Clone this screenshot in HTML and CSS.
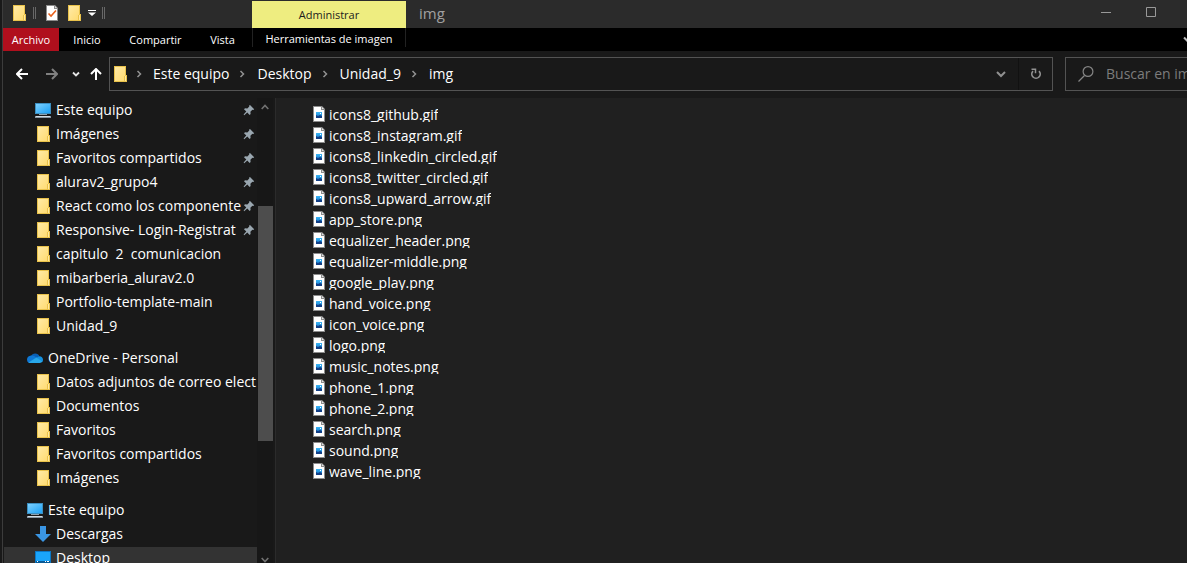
FILE: index.html
```html
<!DOCTYPE html>
<html lang="es">
<head>
<meta charset="utf-8">
<title>img</title>
<link rel="stylesheet" href="styles.css">
</head>
<body>
<svg class="defs" aria-hidden="true">
  <defs>
    <linearGradient id="gFolder" x1="0" y1="0" x2="1" y2="1"><stop offset="0" stop-color="#ffeaa6"/><stop offset="1" stop-color="#ffdb70"/></linearGradient>
    <linearGradient id="gScreen" x1="0" y1="0" x2="1" y2="1"><stop offset="0" stop-color="#7cd0ff"/><stop offset="1" stop-color="#1ea2f5"/></linearGradient>
    <linearGradient id="gPhoto" x1="0" y1="0" x2="0" y2="1"><stop offset="0" stop-color="#3ab5f5"/><stop offset="1" stop-color="#1474c8"/></linearGradient>
    <symbol id="folder" viewBox="0 0 16 16"><path d="M2 0h12v9h1v7H2z" fill="#e9c24b"/><path d="M3 1h10v9h-1v5H3z" fill="url(#gFolder)"/><path d="M13 10h1v5h-1z" fill="#ffe9a2"/></symbol>
    <symbol id="pc" viewBox="0 0 16 16"><path d="M0 1h16v11H0z" fill="#3d8fc0"/><path d="M1 2h14v9H1z" fill="url(#gScreen)"/><path d="M5 12h6v1H5z" fill="#73818c"/><path d="M4 12h8v1H4z" fill="#8fa2b0"/><path d="M0 14h16v2H0z" fill="#8997a3"/><path d="M1 14h14v1H1z" fill="#d1dbe2"/></symbol>
    <symbol id="pin" viewBox="0 0 12 12"><path d="M7 1l4.200 4.200-1 .8-.8-.2-2 2 .2 2.200-1 1L4.300 8.600 1.200 11.200l-.6-.6L3.300 7.500 1 5.200l1-1 2.300.3 2-2L6 1.800z" fill="#9aa7b0"/></symbol>
    <symbol id="cloud" viewBox="0 0 16 12"><path d="M4 4.500a4.500 4.500 0 0 1 8.400 0L8 8z" fill="#0a5fb4"/><path d="M4 3.600c2.500-.6 4 1 6 2.300L2 11a3.700 3.700 0 0 1-2-3.300C0 5.400 1.700 3.800 4 3.600z" fill="#0f78d4"/><path d="M12.300 4.200c2.300.1 3.700 1.700 3.700 3.500 0 1-.4 2-1 2.500L9 6z" fill="#1490df"/><path d="M9.400 5.600L15.400 9.600c-.6.900-1.500 1.400-2.600 1.400H3.500c-.8 0-1.500-.2-2-.6z" fill="#28a8ea"/></symbol>
    <symbol id="down" viewBox="0 0 16 16"><path d="M5 0h6v8h5l-8 8-8-8h5z" fill="#3a96e4"/></symbol>
    <symbol id="desk" viewBox="0 0 16 16"><path d="M0 1h16v13H0z" fill="#0a78c8"/><path d="M1 2h14v9H1z" fill="#1aa5fb"/><path d="M1 11h14v2H1z" fill="#085a96"/><path d="M2 11h1v1H2zM10 11h1v1h-1zM12 11h2v1h-2z" fill="#fff"/></symbol>
    <symbol id="photo" viewBox="0 0 12 16"><path d="M0 0h9l3 3v13H0z" fill="#8c8c8c"/><path d="M1 1h7v3h3v11H1z" fill="#fff"/><path d="M9 1l2 2H9z" fill="#e4e4e4"/><path d="M3 6h6v6H3z" fill="url(#gPhoto)"/><path d="M3 9l2 1 2-1 2 1v2H3z" fill="#123f86"/><path d="M7 7h1v1H7z" fill="#fff"/></symbol>
    <symbol id="chev" viewBox="0 0 6 8"><path d="M1.500 1L4.500 4 1.500 7" fill="none" stroke="#929292" stroke-width="1.500"/></symbol>
  </defs>
</svg>
<main class="window">
  <header class="title">
    <div class="quick">
      <svg class="i16"><use href="#folder"/></svg>
      <span class="grip"></span>
      <button class="plain" aria-label="Propiedades"><svg class="sheet" viewBox="0 0 12 16"><path d="M0 0h9l3 3v13H0z" fill="#8c8c8c"/><path d="M1 1h7v3h3v11H1z" fill="#fff"/><path d="M9 1l2 2H9z" fill="#ddd"/><path d="M2.500 8.500L5 11l5-5.500" fill="none" stroke="#e8601c" stroke-width="1.600"/></svg></button>
      <button class="plain new" aria-label="Nueva carpeta"><svg class="i16"><use href="#folder"/></svg></button>
      <button class="plain" aria-label="Personalizar"><svg class="cust" viewBox="0 0 8 6"><path d="M0 0h8v1H0zM0 2.500h8L4 6z" fill="#fff"/></svg></button>
      <span class="grip"></span>
    </div>
    <button class="manage">Administrar</button>
    <h1 class="name">img</h1>
    <div class="controls">
      <button class="plain" aria-label="Minimizar"><svg class="ctl" viewBox="0 0 10 10"><path d="M0 5h10v1H0z" fill="#999"/></svg></button>
      <button class="plain" aria-label="Maximizar"><svg class="ctl" viewBox="0 0 10 10"><path d="M.5.5h9v9h-9z" fill="none" stroke="#999"/></svg></button>
    </div>
  </header>
  <nav class="tabs">
    <button class="tab file">Archivo</button>
    <button class="tab home">Inicio</button>
    <button class="tab share">Compartir</button>
    <button class="tab view">Vista</button>
    <button class="tab tools">Herramientas de imagen</button>
    <button class="plain expand" aria-label="Expandir"><svg viewBox="0 0 10 8"><path d="M1 1.500l4 4 4-4" fill="none" stroke="#bbb" stroke-width="2"/></svg></button>
  </nav>
  <div class="bar">
    <div class="arrows">
      <button class="plain" aria-label="Atrás"><svg class="arr" viewBox="0 0 12 12"><path d="M12 6H1M6 1L1 6l5 5" fill="none" stroke="#fff" stroke-width="2"/></svg></button>
      <button class="plain fwd" aria-label="Adelante"><svg class="arr" viewBox="0 0 12 12"><path d="M0 6h11M6 1l5 5-5 5" fill="none" stroke="#808080" stroke-width="2"/></svg></button>
      <button class="plain recent" aria-label="Recientes"><svg class="small" viewBox="0 0 8 6"><path d="M1 1.500L4 4.500 7 1.500" fill="none" stroke="#e4e4e4" stroke-width="1.800"/></svg></button>
      <button class="plain up" aria-label="Arriba"><svg class="arr" viewBox="0 0 12 12"><path d="M6 12V1M1 6l5-5 5 5" fill="none" stroke="#fff" stroke-width="2"/></svg></button>
    </div>
    <div class="address">
      <svg class="i16"><use href="#folder"/></svg>
      <svg class="sep"><use href="#chev"/></svg><a href="#">Este equipo</a>
      <svg class="sep"><use href="#chev"/></svg><a href="#">Desktop</a>
      <svg class="sep"><use href="#chev"/></svg><a href="#">Unidad_9</a>
      <svg class="sep"><use href="#chev"/></svg><a href="#">img</a>
      <button class="plain drop" aria-label="Ubicaciones"><svg viewBox="0 0 10 7"><path d="M1 1l4 4 4-4" fill="none" stroke="#909090" stroke-width="2"/></svg></button>
      <button class="plain reload" aria-label="Actualizar"><svg viewBox="0 0 12 12"><path d="M3 3.100A4.200 4.200 0 1 0 9 3.100" fill="none" stroke="#929292" stroke-width="1.700"/><path d="M1.500 1.200h4v4" fill="none" stroke="#929292" stroke-width="1.500"/></svg></button>
    </div>
    <label class="search">
      <svg viewBox="0 0 16 16"><path d="M.5 15.500L6.500 9.500" stroke="#858585" stroke-width="1.200"/><circle cx="10" cy="5.500" r="4.900" fill="none" stroke="#858585" stroke-width="1.200"/></svg>
      <input type="text" aria-label="Buscar" placeholder="Buscar en img">
    </label>
  </div>
  <div class="body">
    <nav class="tree">
      <a class="node" href="#"><svg class="i16"><use href="#pc"/></svg><span>Este equipo</span><svg class="pin"><use href="#pin"/></svg></a>
      <a class="node" href="#"><svg class="i16"><use href="#folder"/></svg><span>Imágenes</span><svg class="pin"><use href="#pin"/></svg></a>
      <a class="node" href="#"><svg class="i16"><use href="#folder"/></svg><span>Favoritos compartidos</span><svg class="pin"><use href="#pin"/></svg></a>
      <a class="node" href="#"><svg class="i16"><use href="#folder"/></svg><span>alurav2_grupo4</span><svg class="pin"><use href="#pin"/></svg></a>
      <a class="node" href="#"><svg class="i16"><use href="#folder"/></svg><span>React como los componente</span><svg class="pin"><use href="#pin"/></svg></a>
      <a class="node" href="#"><svg class="i16"><use href="#folder"/></svg><span>Responsive- Login-Registrat</span><svg class="pin"><use href="#pin"/></svg></a>
      <a class="node" href="#"><svg class="i16"><use href="#folder"/></svg><span>capitulo  2  comunicacion</span></a>
      <a class="node" href="#"><svg class="i16"><use href="#folder"/></svg><span>mibarberia_alurav2.0</span></a>
      <a class="node" href="#"><svg class="i16"><use href="#folder"/></svg><span>Portfolio-template-main</span></a>
      <a class="node" href="#"><svg class="i16"><use href="#folder"/></svg><span>Unidad_9</span></a>
      <a class="node root" href="#"><svg class="i16"><use href="#cloud"/></svg><span>OneDrive - Personal</span></a>
      <a class="node" href="#"><svg class="i16"><use href="#folder"/></svg><span>Datos adjuntos de correo elect</span></a>
      <a class="node" href="#"><svg class="i16"><use href="#folder"/></svg><span>Documentos</span></a>
      <a class="node" href="#"><svg class="i16"><use href="#folder"/></svg><span>Favoritos</span></a>
      <a class="node" href="#"><svg class="i16"><use href="#folder"/></svg><span>Favoritos compartidos</span></a>
      <a class="node" href="#"><svg class="i16"><use href="#folder"/></svg><span>Imágenes</span></a>
      <a class="node root" href="#"><svg class="i16"><use href="#pc"/></svg><span>Este equipo</span></a>
      <a class="node" href="#"><svg class="i16"><use href="#down"/></svg><span>Descargas</span></a>
      <a class="node current" href="#"><svg class="i16"><use href="#desk"/></svg><span>Desktop</span></a>
    </nav>
    <div class="scroll">
      <svg viewBox="0 0 8 6"><path d="M.7 5L4 1.500 7.300 5" fill="none" stroke="#727272" stroke-width="1.600"/></svg>
      <span class="thumb"></span>
      <svg viewBox="0 0 8 6"><path d="M.7 1L4 4.500 7.300 1" fill="none" stroke="#727272" stroke-width="1.600"/></svg>
    </div>
    <section class="files">
      <a class="item" href="#"><svg><use href="#photo"/></svg><span>icons8_github.gif</span></a>
      <a class="item" href="#"><svg><use href="#photo"/></svg><span>icons8_instagram.gif</span></a>
      <a class="item" href="#"><svg><use href="#photo"/></svg><span>icons8_linkedin_circled.gif</span></a>
      <a class="item" href="#"><svg><use href="#photo"/></svg><span>icons8_twitter_circled.gif</span></a>
      <a class="item" href="#"><svg><use href="#photo"/></svg><span>icons8_upward_arrow.gif</span></a>
      <a class="item" href="#"><svg><use href="#photo"/></svg><span>app_store.png</span></a>
      <a class="item" href="#"><svg><use href="#photo"/></svg><span>equalizer_header.png</span></a>
      <a class="item" href="#"><svg><use href="#photo"/></svg><span>equalizer-middle.png</span></a>
      <a class="item" href="#"><svg><use href="#photo"/></svg><span>google_play.png</span></a>
      <a class="item" href="#"><svg><use href="#photo"/></svg><span>hand_voice.png</span></a>
      <a class="item" href="#"><svg><use href="#photo"/></svg><span>icon_voice.png</span></a>
      <a class="item" href="#"><svg><use href="#photo"/></svg><span>logo.png</span></a>
      <a class="item" href="#"><svg><use href="#photo"/></svg><span>music_notes.png</span></a>
      <a class="item" href="#"><svg><use href="#photo"/></svg><span>phone_1.png</span></a>
      <a class="item" href="#"><svg><use href="#photo"/></svg><span>phone_2.png</span></a>
      <a class="item" href="#"><svg><use href="#photo"/></svg><span>search.png</span></a>
      <a class="item" href="#"><svg><use href="#photo"/></svg><span>sound.png</span></a>
      <a class="item" href="#"><svg><use href="#photo"/></svg><span>wave_line.png</span></a>
    </section>
  </div>
</main>
</body>
</html>
```
FILE: styles.css
```css
* { box-sizing: border-box; }
body { margin: 0; background: #191919; color: #fff; font: 14px/20px "Open Sans", "Noto Sans", sans-serif; overflow: hidden; }
a { color: inherit; text-decoration: none; }
svg { display: block; flex: none; }
button { font: inherit; color: inherit; border: 0; padding: 0; }
.defs { position: absolute; width: 0; height: 0; }
.plain { background: none; display: flex; align-items: center; justify-content: center; }
.i16 { width: 16px; height: 16px; }
.window { height: 100vh; display: flex; flex-direction: column; margin-left: 2px; border-left: 1px solid #3c3c3c; }

.title { flex: none; height: 28px; background: #2b2b2b; display: flex; }
.quick { width: 249px; padding: 0 0 3px 8px; display: flex; align-items: center; }
.grip { width: 3px; height: 12px; margin-left: 6px; border: 1px solid #686868; border-width: 0 1px; }
.sheet { width: 12px; height: 16px; margin-left: 10px; }
.new { margin-left: 8px; }
.cust { width: 8px; height: 6px; margin-left: 6px; }
.manage { width: 154px; margin-top: 1px; background: #eeed80; color: #1c1c1c; font-size: 11px; }
.name { margin: 0 0 0 13px; font-size: 15px; font-weight: 400; line-height: 26px; color: #a0a0a0; }
.controls { margin-left: auto; display: flex; gap: 35px; padding: 0 31px 4px 0; }
.ctl { width: 10px; height: 10px; }

.tabs { flex: none; height: 23px; background: #000; display: flex; font-size: 11px; line-height: 22px; overflow: hidden; }
.tab { background: none; }
.file { width: 56px; background: #b00f1d; }
.home { width: 56px; }
.share { width: 81px; }
.view { width: 53px; }
.tools { width: 154px; margin: 0 0 4px 3px; padding-top: 2px; border: 1px solid #222; border-width: 0 1px; line-height: 18px; }
.expand { margin: 0 -6px 0 auto; }
.expand svg { width: 10px; height: 8px; }

.bar { flex: none; height: 47px; padding: 6px 0 7px; display: flex; overflow: hidden; }
.arrows { width: 106px; padding-left: 13px; display: flex; align-items: center; }
.arr { width: 12px; height: 12px; }
.fwd { margin-left: 18px; }
.recent { margin-left: 14px; }
.small { width: 8px; height: 6px; }
.up { margin-left: 10px; }
.address { flex: 1; min-width: 0; border: 1px solid #535353; padding-left: 2px; display: flex; align-items: center; }
.address a { margin-left: 12px; }
.sep { width: 6px; height: 8px; margin-left: 10px; }
.address .i16 + .sep { margin-left: 8px; }
.address .i16 + .sep + a { margin-left: 11px; }
.drop { margin-left: auto; width: 34px; height: 32px; }
.drop svg { width: 10px; height: 7px; }
.reload { width: 34px; height: 32px; border-left: 1px solid #111; }
.reload svg { width: 12px; height: 12px; }
.search { flex: 0 0 122px; margin-left: 12px; padding-left: 12px; border: 1px solid #535353; border-right: 0; display: flex; align-items: center; overflow: hidden; }
.search svg { width: 16px; height: 16px; }
.search input { flex: 1; min-width: 0; margin-left: 12px; padding: 0; border: 0; background: none; font: inherit; color: #fff; }
.search input::placeholder { color: #7c7c7c; opacity: 1; }

.body { flex: 1; min-height: 0; display: flex; }
.tree { width: 254px; flex: none; padding-top: 1px; overflow: hidden; }
.node { display: flex; align-items: center; height: 24px; margin-left: 1px; padding: 0 0 2px 31px; white-space: pre; }
.node span { flex: 1; min-width: 0; margin-left: 5px; overflow: hidden; }
.pin { width: 12px; height: 12px; margin: 0 2px 0 1px; }
.root { margin-top: 8px; padding-left: 23px; }
.current { background: #333; }
.scroll { flex: none; width: 16px; display: flex; flex-direction: column; align-items: center; padding-top: 6px; background: #171717; }
.scroll svg { width: 8px; height: 6px; }
.thumb { width: 15px; height: 235px; margin: 96px 0 auto; background: #4d4d4d; }
.files { flex: 1; margin-left: 2px; padding: 6px 0 0 37px; border-left: 1px solid #2b2b2b; background: #202020; overflow: hidden; }
.item { display: flex; align-items: flex-start; height: 21px; }
.item svg { width: 12px; height: 16px; margin-top: 2px; }
.item span { height: 18px; margin-left: 4px; line-height: 22px; overflow: hidden; white-space: nowrap; }
```
